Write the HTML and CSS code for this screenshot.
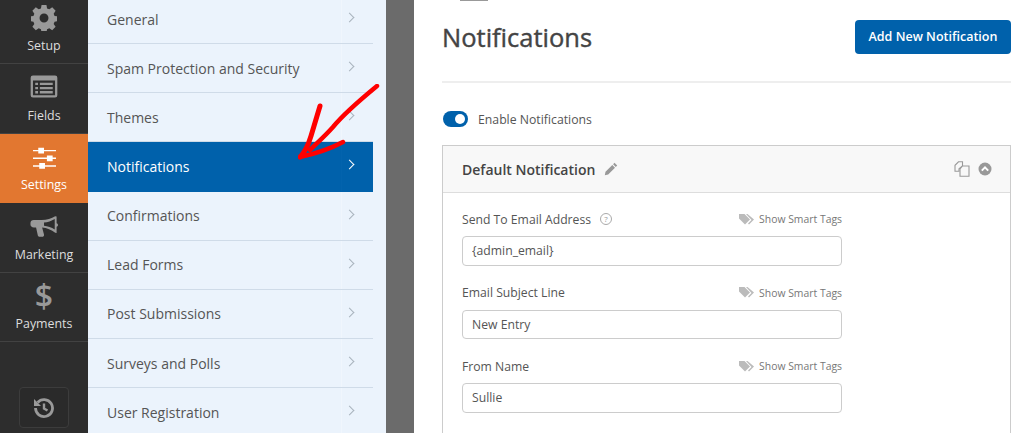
FILE: index.html
```html
<!DOCTYPE html>
<html lang="en">
<head>
    <meta charset="UTF-8">
    <meta name="viewport" content="width=device-width, initial-scale=1.0">
    <title>Form Settings - Notifications</title>
    <link rel="stylesheet" href="styles.css">
</head>
<body>
    <div class="builder">
        <nav class="sidebar">
            <a class="side-item side-first">
                <svg class="side-icon" width="26" height="26" viewBox="0 0 32 32"><path fill="#999" fill-rule="evenodd" d="M13 0h6l.8 4.200 2.700 1.100 3.600-2.400 4.200 4.200-2.400 3.600 1.100 2.700 4 .8v5.600l-4 .8-1.100 2.700 2.400 3.600-4.200 4.200-3.600-2.400-2.700 1.100-.8 4.200h-6l-.8-4.200-2.700-1.100-3.600 2.400-4.200-4.200 2.400-3.600-1.100-2.700-4-.8v-5.600l4-.8 1.100-2.700-2.400-3.600 4.200-4.200 3.600 2.400 2.700-1.100zM16 10.500a5.500 5.500 0 1 0 0 11a5.500 5.500 0 0 0 0-11z"/></svg>
                <span>Setup</span>
            </a>
            <a class="side-item">
                <svg class="side-icon icon-fields" width="28" height="23" viewBox="0 0 30 25"><path fill="#999" fill-rule="evenodd" d="M3 .5h24a2.500 2.500 0 0 1 2.500 2.500v19a2.500 2.500 0 0 1-2.500 2.500H3a2.500 2.500 0 0 1-2.500-2.500V3A2.500 2.500 0 0 1 3 .5zM3 6v16h24V6zm2.500 2.500h3v2.500h-3zm5 0h14v2.500h-14zm-5 4.500h3v2.500h-3zm5 0h14v2.500h-14zm-5 4.500h3V20h-3zm5 0h14V20h-14z"/></svg>
                <span>Fields</span>
            </a>
            <a class="side-item side-active">
                <svg class="side-icon" width="25" height="23" viewBox="0 0 26 24"><path fill="#fff" d="M1 3h24v1.500H1zM1 11h24v1.500H1zM1 19h24v1.500H1zM6.500.8h6v6h-6zM15.500 8.800h6v6h-6zM7.500 16.800h6v6h-6z"/></svg>
                <span>Settings</span>
            </a>
            <a class="side-item">
                <svg class="side-icon" width="28" height="25" viewBox="0 0 30 26"><path fill="#999" d="M27 1l1.500.3v7.200c1 .4 1.500 1 1.500 1.800s-.5 1.500-1.500 1.800v6.900L27 18.500C23 15.500 18 13.500 13 13l2 7.500c.3 1.300-.5 2.500-2 2.500h-2.500c-1 0-1.800-.6-2.100-1.500L6.500 13H4c-2 0-3.500-1.400-3.500-3.200V8.200C.5 6.400 2 5 4 5h8.500C18 5 23 3.500 27 1zm-.5 2.800C23 6 19 7.200 15 7.600v3.500c4 .6 8 1.800 11.500 4z"/></svg>
                <span>Marketing</span>
            </a>
            <a class="side-item">
                <span class="dollar">$</span>
                <span>Payments</span>
            </a>
            <div class="side-bottom">
                <button class="history-btn">
                    <svg width="22" height="22" viewBox="0 0 22 22" fill="none" stroke="#999"><path stroke-width="2.800" d="M4.600 5.500A8.500 8.500 0 1 1 2.500 11"/><path stroke-width="2.400" d="M11 6.500V11.500L14.500 13.500"/><path fill="#999" stroke="none" d="M1 2l7 7H1z"/></svg>
                </button>
            </div>
        </nav>

        <div class="panel">
            <a class="panel-row">General<span class="chev"></span></a>
            <a class="panel-row">Spam Protection and Security<span class="chev"></span></a>
            <a class="panel-row">Themes<span class="chev"></span></a>
            <a class="panel-row panel-active">Notifications<span class="chev"></span></a>
            <a class="panel-row">Confirmations<span class="chev"></span></a>
            <a class="panel-row">Lead Forms<span class="chev"></span></a>
            <a class="panel-row">Post Submissions<span class="chev"></span></a>
            <a class="panel-row">Surveys and Polls<span class="chev"></span></a>
            <a class="panel-row">User Registration<span class="chev"></span></a>
        </div>

        <div class="gutter"></div>

        <main class="content">
            <div class="top-mark"></div>
            <div class="content-head">
                <h1>Notifications</h1>
                <button class="add-btn">Add New Notification</button>
            </div>

            <div class="toggle-row">
                <span class="toggle"></span>
                <span>Enable Notifications</span>
            </div>

            <section class="card">
                <div class="card-head">
                    <h2>Default Notification</h2>
                    <svg class="pencil" width="14" height="14" viewBox="0 0 14 14"><path fill="#999" d="M10.500.8l2.700 2.700-1.400 1.400-2.700-2.700zM8.300 3l2.700 2.700-6.800 6.800-3.400.7.700-3.400z"/></svg>
                    <div class="card-tools">
                        <svg width="16" height="16" viewBox="0 0 16 16" fill="#f8f8f8" stroke="#999" stroke-width="1.100"><path d="M4.500.8h4v4l-3.500 3v2.500H1V4.300z"/><path d="M8.500 5h6.500v10.200H6V7.800z"/></svg>
                        <svg width="14" height="14" viewBox="0 0 14 14"><circle cx="7" cy="7" r="6.500" fill="#999"/><path d="M3.800 8.600L7 5.400l3.200 3.200" fill="none" stroke="#fff" stroke-width="2"/></svg>
                    </div>
                </div>
                <div class="card-body">
                    <div class="field">
                        <div class="field-label">
                            <label>Send To Email Address</label>
                            <span class="help">?</span>
                            <span class="smart-tags"><svg class="tag" width="15" height="11" viewBox="0 0 15 11"><path fill="#bbb" d="M0 0h5.500l5.500 5.500L6 10.500 0 4.500z"/><path fill="#bbb" d="M7 0h1.500L15 5.500l-5 5-1-1 3.500-3.500z"/></svg>Show Smart Tags</span>
                        </div>
                        <input class="text-input" type="text" value="{admin_email}">
                    </div>
                    <div class="field">
                        <div class="field-label">
                            <label>Email Subject Line</label>
                            <span class="smart-tags"><svg class="tag" width="15" height="11" viewBox="0 0 15 11"><path fill="#bbb" d="M0 0h5.500l5.500 5.500L6 10.500 0 4.500z"/><path fill="#bbb" d="M7 0h1.500L15 5.500l-5 5-1-1 3.500-3.500z"/></svg>Show Smart Tags</span>
                        </div>
                        <input class="text-input" type="text" value="New Entry">
                    </div>
                    <div class="field">
                        <div class="field-label">
                            <label>From Name</label>
                            <span class="smart-tags"><svg class="tag" width="15" height="11" viewBox="0 0 15 11"><path fill="#bbb" d="M0 0h5.500l5.500 5.500L6 10.500 0 4.500z"/><path fill="#bbb" d="M7 0h1.500L15 5.500l-5 5-1-1 3.500-3.500z"/></svg>Show Smart Tags</span>
                        </div>
                        <input class="text-input" type="text" value="Sullie">
                    </div>
                </div>
            </section>
        </main>

        <!-- hand drawn arrow on top of the screenshot -->
        <svg class="arrow" width="100" height="90" viewBox="0 0 100 90" fill="none" stroke="#f00" stroke-linecap="round" stroke-linejoin="round">
            <path stroke-width="4.500" d="M79 2C62 16 44 32 35 43C27 52 18 60 12 66"/>
            <path stroke-width="5" d="M22 22C19 32 16 42 13 52C10 62 7 68 2 73"/>
            <path stroke-width="4.500" d="M45 58C32 65 16 70 2 73"/>
        </svg>
    </div>
</body>
</html>
```

FILE: styles.css
```css
* {
    box-sizing: border-box;
}
html, body {
    margin: 0;
    height: 433px;
    overflow: hidden;
}
body {
    font-family: "Open Sans", Arial, sans-serif;
    font-size: 13px;
    color: #444;
    background: #fff;
}
.builder {
    display: flex;
    position: relative;
    height: 433px;
    overflow: hidden;
}

/* left dark bar */
.sidebar {
    width: 88px;
    flex: none;
    display: flex;
    flex-direction: column;
    background: #2d2d2d;
}
.side-item {
    height: 69.500px;
    flex: none;
    display: flex;
    flex-direction: column;
    align-items: center;
    justify-content: flex-end;
    padding-bottom: 8px;
    border-bottom: 1px solid #424242;
    color: #ddd;
    font-size: 12.400px;
    line-height: 18px;
}
.side-first {
    height: 64px;
}
.side-icon {
    margin-bottom: 6px;
}
.icon-fields {
    margin-bottom: 9px;
}
.side-active {
    background: #e27730;
    color: #fff;
    border-bottom-color: #e27730;
}
.dollar {
    height: 30px;
    margin-bottom: 4px;
    font-size: 32px;
    font-weight: 600;
    line-height: 30px;
    color: #999;
}
.side-bottom {
    flex: 1;
    display: flex;
    justify-content: center;
    align-items: flex-end;
    padding-bottom: 5px;
}
.history-btn {
    width: 50px;
    height: 41px;
    display: flex;
    align-items: center;
    justify-content: center;
    background: #2a2a2a;
    border: 1px solid #3c3c3c;
    border-radius: 4px;
    padding: 0;
}

/* settings list */
.panel {
    width: 298px;
    flex: none;
    padding-right: 13px;
    margin-top: -5px;
    background: #ebf3fc;
}
.panel-row {
    height: 49.150px;
    display: flex;
    align-items: center;
    justify-content: space-between;
    padding: 0 0 0 19px;
    border-bottom: 1px solid #cfdbe8;
    font-size: 14px;
    color: #555;
}
.panel-active {
    background: #0061ab;
    color: #fff;
    border-bottom-color: #0061ab;
}
.chev {
    position: relative;
    align-self: stretch;
    width: 32px;
    border-left: 1px solid #f0f6fd;
}
.panel-active .chev {
    border-left-color: #0363ad;
}
.chev::after {
    content: "";
    position: absolute;
    left: 4px;
    top: 19px;
    width: 6px;
    height: 6px;
    border-top: 1px solid #a9b3bd;
    border-right: 1px solid #a9b3bd;
    transform: rotate(45deg);
}
.panel-active .chev::after {
    border-color: #fff;
}
.gutter {
    width: 28px;
    flex: none;
    background: #6b6b6b;
}

/* main settings */
.content {
    flex: 1;
    position: relative;
    padding: 0 13px 0 28px;
}
.top-mark {
    position: absolute;
    left: 46px;
    top: 0;
    width: 28px;
    height: 1px;
    background: #999;
}
.content-head {
    display: flex;
    align-items: center;
    justify-content: space-between;
    height: 83px;
    padding-bottom: 8px;
    border-bottom: 2px solid #eee;
}
h1 {
    margin: 0;
    font-size: 25.500px;
    font-weight: 400;
    -webkit-text-stroke: .4px #444;
    color: #444;
}
.add-btn {
    width: 156px;
    height: 34px;
    background: #0061ab;
    color: #fff;
    border: none;
    border-radius: 4px;
    font-family: inherit;
    font-size: 12.500px;
    font-weight: 600;
    padding: 0;
}
.toggle-row {
    display: flex;
    align-items: center;
    gap: 10px;
    height: 30px;
    margin: 21px 0 11px 1px;
    font-size: 12.250px;
    color: #555;
}
.toggle {
    position: relative;
    width: 25px;
    height: 16px;
    border-radius: 8px;
    background: #0061ab;
}
.toggle::after {
    content: "";
    position: absolute;
    top: 3px;
    right: 3px;
    width: 10px;
    height: 10px;
    border-radius: 50%;
    background: #fff;
}
.card {
    border: 1px solid #ccc;
    border-bottom: none;
}
.card-head {
    display: flex;
    align-items: center;
    gap: 9px;
    height: 47px;
    padding: 0 18px 0 19px;
    background: #f8f8f8;
    border-bottom: 1px solid #ddd;
}
h2 {
    margin: 0;
    font-size: 14px;
    font-weight: 600;
    color: #444;
}
.card-tools {
    margin-left: auto;
    display: flex;
    align-items: center;
    gap: 8px;
}
.card-body {
    width: 399px;
    padding: 17px 0 40px 19px;
}
.field {
    margin-bottom: 18px;
}
.field-label {
    display: flex;
    align-items: center;
    height: 18px;
    margin-bottom: 8px;
    font-size: 12.200px;
    color: #555;
}
.help {
    width: 12px;
    height: 12px;
    margin-left: 9px;
    border: 1px solid #aaa;
    border-radius: 50%;
    font-size: 8px;
    line-height: 10px;
    text-align: center;
    color: #999;
}
.smart-tags {
    margin-left: auto;
    display: flex;
    align-items: center;
    gap: 5px;
    font-size: 10.400px;
    color: #777;
}
.text-input {
    display: block;
    width: 100%;
    height: 29.500px;
    padding: 0 9px;
    border: 1px solid #ccc;
    border-radius: 4px;
    font-family: inherit;
    font-size: 12.200px;
    color: #555;
    background: #fff;
}
.arrow {
    position: absolute;
    left: 298px;
    top: 84px;
}
```
